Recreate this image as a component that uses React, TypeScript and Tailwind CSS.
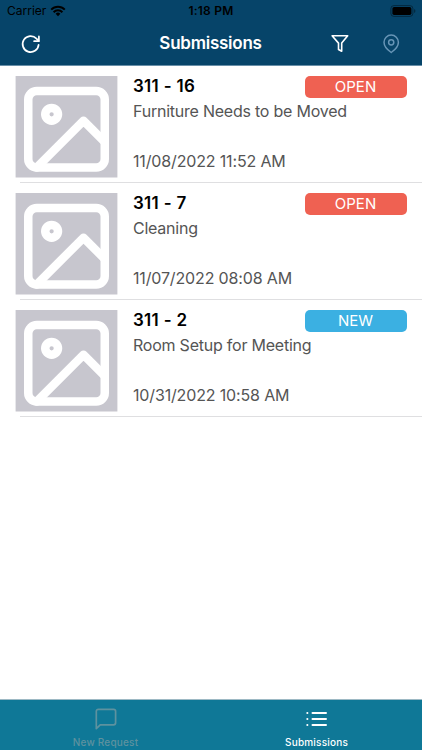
import React from 'react';

const items = [
  { id: '311 - 16', title: 'Furniture Needs to be Moved', date: '11/08/2022 11:52 AM', status: 'OPEN', badge: 'bg-[#ef6152]' },
  { id: '311 - 7', title: 'Cleaning', date: '11/07/2022 08:08 AM', status: 'OPEN', badge: 'bg-[#ef6152]' },
  { id: '311 - 2', title: 'Room Setup for Meeting', date: '10/31/2022 10:58 AM', status: 'NEW', badge: 'bg-[#3bb0e2]' },
];

function StatusBar() {
  return (
    <div className="grid h-[22px] grid-cols-3 items-center px-[7px] text-[12px] leading-[22px] text-black">
      <div className="flex items-center gap-[4px]">
        <span>Carrier</span>
        <svg width="16" height="12" viewBox="0 0 16 12" fill="none" stroke="currentColor" strokeWidth="2">
          <path d="M1.2 4.6a9.6 9.6 0 0 1 13.6 0" />
          <path d="M3.6 7.2a6.2 6.2 0 0 1 8.8 0" />
          <path d="M8 11.3 5.6 8.8a3.4 3.4 0 0 1 4.8 0Z" fill="currentColor" stroke="none" />
        </svg>
      </div>
      <span className="text-center font-semibold tracking-[0.2px]">1:18 PM</span>
      <svg className="-mr-[1px] justify-self-end" width="26" height="12" viewBox="0 0 26 12">
        <rect x="0.9" y="0.6" width="22" height="10.8" rx="3" fill="none" stroke="#000" strokeOpacity="0.4" />
        <rect x="2.4" y="2.1" width="19" height="7.8" rx="1.7" fill="#000" />
        <path d="M24.2 4v4c1.6-.6 1.6-3.4 0-4Z" fill="#000" fillOpacity="0.45" />
      </svg>
    </div>
  );
}

function NavBar() {
  return (
    <div className="grid h-[43px] grid-cols-[1fr_auto_1fr] items-center pr-[21px] pl-[20px]">
      <svg width="22" height="22" viewBox="0 0 22 22" fill="none" stroke="#fff" strokeWidth="1.7" strokeLinecap="round" strokeLinejoin="round">
        <path d="M18.6 11.8A8 8 0 1 1 16.5 5.6L18.6 8" />
        <path d="M18.9 3.4v4.8h-4.8" />
      </svg>
      <h1 className="text-[17px] font-semibold tracking-[-0.25px] text-white">Submissions</h1>
      <div className="flex items-center gap-[31px] justify-self-end">
        <svg width="20" height="20" viewBox="0 0 20 20" fill="none" stroke="#fff" strokeWidth="1.6" strokeLinejoin="round">
          <path d="M2.1 1.8h15.6l-6 7.3v8.2l-3.2-1.8V9.1Z" />
        </svg>
        <svg width="20" height="20" viewBox="0 0 20 20" fill="none" stroke="#6795b6" strokeWidth="1.5">
          <path d="M17.4 8.3C17.4 13.6 10.2 18.5 10.2 18.5S3 13.6 3 8.3a7.2 7.2 0 0 1 14.4 0Z" />
          <circle cx="10.2" cy="8.3" r="2.6" />
        </svg>
      </div>
    </div>
  );
}

function Placeholder() {
  return (
    <svg className="shrink-0" width="103" height="102" viewBox="0 0 103 102" fill="none">
      <path d="M.6 0h101.8v101.5H.6Z" fill="#c7c6ce" />
      <g transform="translate(.5 2.2) scale(4.25)" stroke="#fff" strokeWidth="2" strokeLinecap="round" strokeLinejoin="round">
        <rect x="3" y="3" width="18" height="18" rx="2" />
        <circle cx="8.5" cy="8.5" r="1.5" />
        <path d="m21 15-5-5L5 21" />
      </g>
    </svg>
  );
}

function Row({ item }: { item: (typeof items)[number] }) {
  return (
    <li className="flex h-[117px] flex-col">
      <div className="flex grow gap-[15px] pt-[10px] pr-[15.5px] pl-[15px]">
        <Placeholder />
        <div className="flex grow flex-col">
          <div className="flex h-[22px] items-center justify-between">
            <span className="text-[17px] font-semibold tracking-[0.3px] text-black">{item.id}</span>
            <span className={`flex h-[22px] w-[102px] items-center justify-center rounded-[5px] text-[15px] text-white ${item.badge}`}>{item.status}</span>
          </div>
          <p className="mt-[2px] text-[16px] leading-[22px] tracking-[-0.23px] text-[#555]">{item.title}</p>
          <p className="mt-[28px] text-[16px] leading-[22px] tracking-[-0.15px] text-[#555]">{item.date}</p>
        </div>
      </div>
      <div className="ml-[20px] h-px bg-[#dfdfe1]" />
    </li>
  );
}

export default function App() {
  return (
    <div className="flex h-[750px] w-[422px] flex-col overflow-hidden bg-white font-['Inter','Liberation_Sans',sans-serif]">
      <header className="h-[66px] shrink-0 border-b border-[#688fa8] bg-[#064469]">
        <StatusBar />
        <NavBar />
      </header>
      <ul className="grow">
        {items.map((item) => <Row key={item.id} item={item} />)}
      </ul>
      <nav className="grid h-[51px] shrink-0 grid-cols-2 border-t border-[#9db9c4] bg-[#0f7897] text-[10px] font-medium tracking-[0.2px]">
        <div className="flex flex-col items-center pt-[7px] text-[#5e929f]">
          <svg width="24" height="24" viewBox="0.4 0 24 24" fill="none" stroke="currentColor" strokeWidth="1.7" strokeLinejoin="round">
            <path d="M22 15.8a2 2 0 0 1-2 2H6.6L2.7 21.7V4.3a2 2 0 0 1 2-2H20a2 2 0 0 1 2 2Z" />
          </svg>
          <span className="mt-[4px] leading-[14px]">New Request</span>
        </div>
        <div className="flex flex-col items-center pt-[7px] text-white">
          <svg width="24" height="24" viewBox="0.5 0 24 24" fill="none" stroke="currentColor" strokeWidth="2" strokeLinecap="round">
            <path d="M8 6h13.5M8 12h13.5M8 18h13.5M2.8 6h.1M2.8 12h.1M2.8 18h.1" />
          </svg>
          <span className="mt-[4px] leading-[14px]">Submissions</span>
        </div>
      </nav>
    </div>
  );
}
